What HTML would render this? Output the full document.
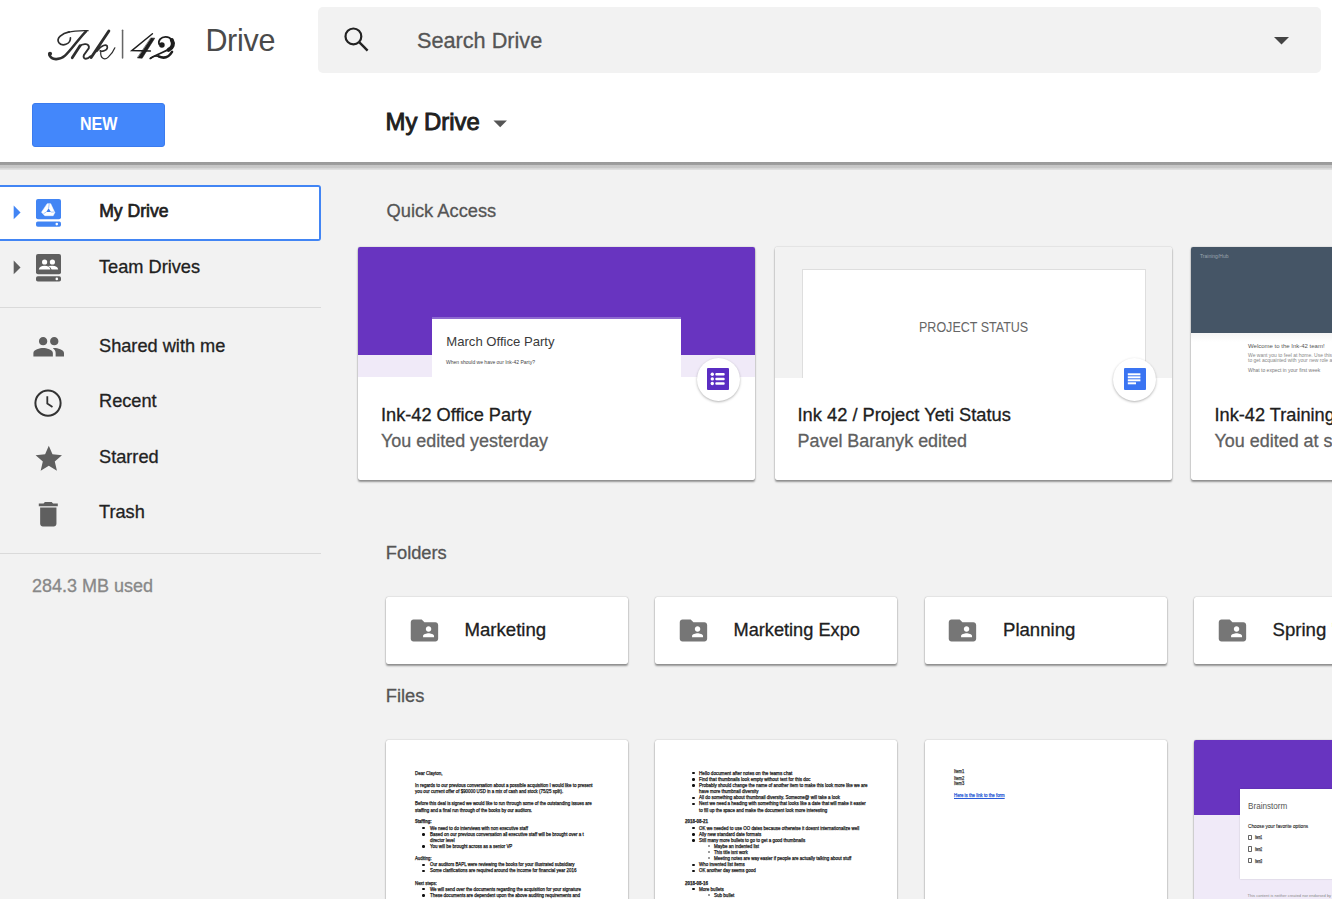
<!DOCTYPE html>
<html><head><meta charset="utf-8"><title>Drive</title><style>
*{box-sizing:border-box;margin:0;padding:0}
html,body{width:1332px;height:899px;overflow:hidden;background:#f2f2f2;font-family:"Liberation Sans",sans-serif}
body{position:relative}
.a{position:absolute}
.t{position:absolute;line-height:1;white-space:nowrap}
.card{position:absolute;background:#fff;box-shadow:0 0 1.2px rgba(0,0,0,.4),0 2px 2px rgba(0,0,0,.38);border-radius:2px;overflow:hidden}
.bar{position:absolute;height:2px;background:#9a9a9a}
</style></head><body>
<div class="a" style="left:0;top:185px;width:321px;height:56px;background:#fff;border:2px solid #4285f4;border-left:none;border-radius:0 3px 3px 0"></div>
<svg class="a" style="left:-0.2px;top:196.2px;" width="32.9" height="32.9" viewBox="0 0 24 24"><path d="M10 17l5-5-5-5v10z" fill="#4285f4"/></svg>
<svg class="a" style="left:-0.2px;top:250.5px;" width="32.9" height="32.9" viewBox="0 0 24 24"><path d="M10 17l5-5-5-5v10z" fill="#5f5f5f"/></svg>
<svg class="a" style="left:36px;top:198.5px" width="25" height="28" viewBox="0 0 25 28">
<rect x="0" y="0" width="25" height="20.2" rx="2" fill="#4285f4"/>
<rect x="0" y="22.5" width="25" height="5.2" rx="1.8" fill="#4285f4"/>
<circle cx="20.8" cy="25.1" r="1.3" fill="#fff"/>
<path d="M11.2 4.7 L14.7 4.7 L18.8 13.6 L17.2 16.7 L8.8 16.7 L5.5 13.2 Z" fill="#fff" stroke="#fff" stroke-width="0.5" stroke-linejoin="round"/><path d="M12.6 9.2 L14.9 13.1 L10.3 13.1 Z" fill="#3b7ef0"/><path d="M12.6 9.2 L13.2 5 M10.3 13.1 L7.6 14.6 M14.9 13.1 L18 13" stroke="#6a9ff5" stroke-width="0.6"/>
</svg>
<svg class="a" style="left:36px;top:254px" width="25" height="28" viewBox="0 0 25 28">
<rect x="0" y="0" width="25" height="20.2" rx="2" fill="#5f5f5f"/>
<rect x="0" y="22.2" width="25" height="5.4" rx="1.8" fill="#5f5f5f"/>
<circle cx="20.8" cy="24.9" r="1.3" fill="#fff"/>
<circle cx="8.6" cy="8" r="2.6" fill="#fff"/><circle cx="16.4" cy="8" r="2.6" fill="#fff"/>
<path d="M2.8 15.4 Q3.5 11.8 8.6 11.8 Q13.7 11.8 14.4 15.4Z M12.2 11.9 Q13.2 11.8 16.4 11.8 Q21.5 11.8 22.2 15.4 L15.6 15.4 Q15 13 12.2 11.9Z" fill="#fff"/>
</svg>
<div class="t" style="left:99.2px;top:203.20px;font-size:17.6px;color:#202020;font-weight:normal;letter-spacing:0px;-webkit-text-stroke:0.67px #202020;">My Drive</div>
<div class="t" style="left:99px;top:257.59px;font-size:18.2px;color:#202020;font-weight:normal;letter-spacing:0px;-webkit-text-stroke:0.3px #202020;">Team Drives</div>
<div class="a" style="left:0;top:307px;width:321px;height:1px;background:#dadada"></div>
<svg class="a" style="left:31.8px;top:330.1px;" width="33.4" height="33.4" viewBox="0 0 24 24"><path d="M16 11c1.66 0 2.99-1.34 2.99-3S17.66 5 16 5c-1.66 0-3 1.34-3 3s1.34 3 3 3zm-8 0c1.66 0 2.990-1.34 2.99-3S9.66 5 8 5C6.34 5 5 6.34 5 8s1.34 3 3 3zm0 2c-2.33 0-7 1.170-7 3.5V19h14v-2.5c0-2.33-4.67-3.5-7-3.5zm8 0c-.29 0-.62.02-.97.05 1.16.84 1.97 1.97 1.97 3.45V19h6v-2.5c0-2.33-4.67-3.5-7-3.5z" fill="#5f5f5f"/></svg>
<svg class="a" style="left:34px;top:388.5px" width="29" height="29" viewBox="0 0 29 29"><circle cx="14" cy="14.1" r="12.6" fill="none" stroke="#333" stroke-width="2"/><path d="M13.3 7.3 V14.6 L18.5 18" fill="none" stroke="#333" stroke-width="1.8"/></svg>
<svg class="a" style="left:32.7px;top:442.7px;" width="31.6" height="31.6" viewBox="0 0 24 24"><path d="M12 17.27L18.18 21l-1.64-7.03L22 9.24l-7.19-.61L12 2 9.19 8.63 2 9.24l5.46 4.73L5.82 21z" fill="#5f5f5f"/></svg>
<svg class="a" style="left:32.2px;top:497.5px;" width="32.6" height="32.6" viewBox="0 0 24 24"><path d="M6 19c0 1.1.9 2 2 2h8c1.1 0 2-.9 2-2V7H6v12zM19 4h-3.5l-1-1h-5l-1 1H5v2h14V4z" fill="#5f5f5f"/></svg>
<div class="t" style="left:99px;top:337.19px;font-size:18.2px;color:#222;font-weight:normal;letter-spacing:0px;-webkit-text-stroke:0.3px #222;">Shared with me</div>
<div class="t" style="left:99px;top:392.19px;font-size:18.2px;color:#222;font-weight:normal;letter-spacing:0px;-webkit-text-stroke:0.3px #222;">Recent</div>
<div class="t" style="left:99px;top:447.69px;font-size:18.2px;color:#222;font-weight:normal;letter-spacing:0px;-webkit-text-stroke:0.3px #222;">Starred</div>
<div class="t" style="left:99px;top:503.19px;font-size:18.2px;color:#222;font-weight:normal;letter-spacing:0px;-webkit-text-stroke:0.3px #222;">Trash</div>
<div class="a" style="left:0;top:553px;width:321px;height:1px;background:#dadada"></div>
<div class="t" style="left:32px;top:576.86px;font-size:18px;color:#888;font-weight:normal;letter-spacing:0px;-webkit-text-stroke:0.3px #888;">284.3 MB used</div>
<div class="t" style="left:386.5px;top:202.41px;font-size:18.3px;color:#555;font-weight:normal;letter-spacing:0px;-webkit-text-stroke:0.3px #555;">Quick Access</div>
<div class="card" style="left:358px;top:247px;width:397px;height:233px">
<div class="a" style="left:0;top:0;width:397px;height:108px;background:#6834c0"></div>
<div class="a" style="left:0;top:108px;width:397px;height:22px;background:#f0eaf8"></div>
<div class="a" style="left:74px;top:70px;width:249px;height:60px;background:#fff;border-top:2px solid #8e6ad0"></div>
<div class="t" style="left:88.3px;top:87.61px;font-size:13.1px;color:#3a3a3a;font-weight:normal;letter-spacing:0px;">March Office Party</div>
<div class="t" style="left:88px;top:112.87px;font-size:5px;color:#444;font-weight:normal;letter-spacing:0px;">When should we have our Ink-42 Party?</div>
<div class="t" style="left:23px;top:159.49px;font-size:18.2px;color:#202020;font-weight:normal;letter-spacing:0px;-webkit-text-stroke:0.3px #202020;">Ink-42 Office Party</div>
<div class="t" style="left:23px;top:185.71px;font-size:17.95px;color:#5f5f5f;font-weight:normal;letter-spacing:0px;-webkit-text-stroke:0.3px #5f5f5f;">You edited yesterday</div>
</div>
<div class="card" style="left:775px;top:247px;width:397px;height:233px">
<div class="a" style="left:0;top:0;width:397px;height:131px;background:#f2f2f2"></div>
<div class="a" style="left:26.5px;top:22px;width:344px;height:109px;background:#fff;border:1px solid #dedede;border-bottom:none"></div>
<div class="t" style="left:143.70000000000005px;top:73.05px;font-size:14px;color:#666;font-weight:normal;transform:scaleX(0.894);transform-origin:0 0;-webkit-text-stroke:0.25px #666;-webkit-text-stroke:0">PROJECT STATUS</div>
<div class="t" style="left:22.5px;top:159.41px;font-size:18.3px;color:#202020;font-weight:normal;letter-spacing:0px;-webkit-text-stroke:0.3px #202020;">Ink 42 / Project Yeti Status</div>
<div class="t" style="left:22.5px;top:185.71px;font-size:17.95px;color:#5f5f5f;font-weight:normal;letter-spacing:0px;-webkit-text-stroke:0.3px #5f5f5f;">Pavel Baranyk edited</div>
</div>
<div class="card" style="left:1191px;top:247px;width:200px;height:233px">
<div class="a" style="left:0;top:0;width:200px;height:86px;background:#455566"></div>
<div class="t" style="left:9px;top:6.87px;font-size:5px;color:#9aa4ae;font-weight:normal;letter-spacing:0px;">Training/Hub</div>
<div class="a" style="left:0;top:86px;width:200px;height:9px;background:linear-gradient(#f4f4f4,#fff)"></div>
<div class="t" style="left:57px;top:96.02px;font-size:6px;color:#555;font-weight:normal;letter-spacing:0px;">Welcome to the Ink-42 team!</div>
<div class="t" style="left:57px;top:105.87px;font-size:5px;color:#888;font-weight:normal;letter-spacing:0px;">We want you to feel at home. Use this document</div>
<div class="t" style="left:57px;top:111.37px;font-size:5px;color:#888;font-weight:normal;letter-spacing:0px;">to get acquainted with your new role and to</div>
<div class="t" style="left:57px;top:120.87px;font-size:5px;color:#777;font-weight:normal;letter-spacing:0px;">What to expect in your first week</div>
<div class="t" style="left:23.5px;top:159.49px;font-size:18.2px;color:#202020;font-weight:normal;letter-spacing:0px;-webkit-text-stroke:0.3px #202020;">Ink-42 Training</div>
<div class="t" style="left:23.5px;top:185.71px;font-size:17.95px;color:#5f5f5f;font-weight:normal;letter-spacing:0px;-webkit-text-stroke:0.3px #5f5f5f;">You edited at s</div>
</div>
<div class="a" style="left:696.5px;top:357.5px;width:43px;height:43px;border-radius:50%;background:#fff;box-shadow:0 1px 2.5px rgba(0,0,0,.3)"></div>
<svg class="a" style="left:707px;top:368.2px" width="22" height="22" viewBox="0 0 22 22"><rect width="22" height="22" rx="1" fill="#5a2dc2"/><circle cx="5.3" cy="6.3" r="1.7" fill="#fff"/><circle cx="5.3" cy="10.9" r="1.7" fill="#fff"/><circle cx="5.3" cy="15.5" r="1.7" fill="#fff"/><rect x="8.3" y="5.1" width="9.4" height="2.5" rx="1" fill="#fff"/><rect x="8.3" y="9.7" width="9.4" height="2.5" rx="1" fill="#fff"/><rect x="8.3" y="14.3" width="9.4" height="2.5" rx="1" fill="#fff"/></svg>
<div class="a" style="left:1113px;top:357.5px;width:43px;height:43px;border-radius:50%;background:#fff;box-shadow:0 1px 2.5px rgba(0,0,0,.3)"></div>
<svg class="a" style="left:1123.5px;top:368px" width="22" height="22" viewBox="0 0 22 22"><rect width="22" height="22" rx="1" fill="#3a74f2"/><rect x="3.8" y="5.3" width="12.6" height="2" fill="#fff"/><rect x="3.8" y="8.3" width="12.6" height="2" fill="#fff"/><rect x="3.8" y="11.3" width="12.6" height="2" fill="#fff"/><rect x="3.8" y="14.3" width="8.2" height="2" fill="#fff"/></svg>
<div class="t" style="left:385.8px;top:544.01px;font-size:18.3px;color:#555;font-weight:normal;letter-spacing:0px;-webkit-text-stroke:0.3px #555;">Folders</div>
<div class="card" style="left:386px;top:597px;width:242px;height:67px"></div>
<svg class="a" style="left:407.9px;top:613.9px;" width="32.9" height="32.9" viewBox="0 0 24 24"><path d="M20 6h-8l-2-2H4c-1.1 0-1.99.9-1.99 2L2 18c0 1.1.9 2 2 2h16c1.1 0 2-.9 2-2V8c0-1.1-.9-2-2-2zm-5 3c1.1 0 2 .9 2 2s-.9 2-2 2-2-.9-2-2 .9-2 2-2zm4 8h-8v-1c0-1.33 2.67-2 4-2s4 .67 4 2v1z" fill="#767676"/></svg>
<div class="t" style="left:464.5px;top:621.16px;font-size:18.6px;color:#202020;font-weight:normal;letter-spacing:0px;-webkit-text-stroke:0.3px #202020;">Marketing</div>
<div class="card" style="left:655px;top:597px;width:242px;height:67px"></div>
<svg class="a" style="left:676.9px;top:613.9px;" width="32.9" height="32.9" viewBox="0 0 24 24"><path d="M20 6h-8l-2-2H4c-1.1 0-1.99.9-1.99 2L2 18c0 1.1.9 2 2 2h16c1.1 0 2-.9 2-2V8c0-1.1-.9-2-2-2zm-5 3c1.1 0 2 .9 2 2s-.9 2-2 2-2-.9-2-2 .9-2 2-2zm4 8h-8v-1c0-1.33 2.67-2 4-2s4 .67 4 2v1z" fill="#767676"/></svg>
<div class="t" style="left:733.5px;top:621.49px;font-size:18.2px;color:#202020;font-weight:normal;letter-spacing:0px;-webkit-text-stroke:0.3px #202020;">Marketing Expo</div>
<div class="card" style="left:924.5px;top:597px;width:242px;height:67px"></div>
<svg class="a" style="left:946.4px;top:613.9px;" width="32.9" height="32.9" viewBox="0 0 24 24"><path d="M20 6h-8l-2-2H4c-1.1 0-1.99.9-1.99 2L2 18c0 1.1.9 2 2 2h16c1.1 0 2-.9 2-2V8c0-1.1-.9-2-2-2zm-5 3c1.1 0 2 .9 2 2s-.9 2-2 2-2-.9-2-2 .9-2 2-2zm4 8h-8v-1c0-1.33 2.67-2 4-2s4 .67 4 2v1z" fill="#767676"/></svg>
<div class="t" style="left:1003.0px;top:621.16px;font-size:18.6px;color:#202020;font-weight:normal;letter-spacing:0px;-webkit-text-stroke:0.3px #202020;">Planning</div>
<div class="card" style="left:1194px;top:597px;width:242px;height:67px"></div>
<svg class="a" style="left:1215.9px;top:613.9px;" width="32.9" height="32.9" viewBox="0 0 24 24"><path d="M20 6h-8l-2-2H4c-1.1 0-1.99.9-1.99 2L2 18c0 1.1.9 2 2 2h16c1.1 0 2-.9 2-2V8c0-1.1-.9-2-2-2zm-5 3c1.1 0 2 .9 2 2s-.9 2-2 2-2-.9-2-2 .9-2 2-2zm4 8h-8v-1c0-1.33 2.67-2 4-2s4 .67 4 2v1z" fill="#767676"/></svg>
<div class="t" style="left:1272.5px;top:621.16px;font-size:18.6px;color:#202020;font-weight:normal;letter-spacing:0px;-webkit-text-stroke:0.3px #202020;">Spring &#x27;18</div>
<div class="t" style="left:385.8px;top:687.31px;font-size:18.3px;color:#555;font-weight:normal;letter-spacing:0px;-webkit-text-stroke:0.3px #555;">Files</div>
<div class="card" style="left:386px;top:740px;width:242px;height:170px"></div>
<div class="t" style="left:415.3px;top:772.04px;font-size:4.8px;color:#1a1a1a;font-weight:normal;transform:scaleX(0.937);transform-origin:0 0;-webkit-text-stroke:0.25px #1a1a1a;">Dear Clayton,</div>
<div class="t" style="left:415.3px;top:783.94px;font-size:4.8px;color:#1a1a1a;font-weight:normal;transform:scaleX(0.929);transform-origin:0 0;-webkit-text-stroke:0.25px #1a1a1a;">In regards to our previous conversation about a possible acquisition I would like to present</div>
<div class="t" style="left:415.3px;top:790.34px;font-size:4.8px;color:#1a1a1a;font-weight:normal;transform:scaleX(0.918);transform-origin:0 0;-webkit-text-stroke:0.25px #1a1a1a;">you our current offer of $90000 USD in a mix of cash and stock (75/25 split).</div>
<div class="t" style="left:415.3px;top:802.24px;font-size:4.8px;color:#1a1a1a;font-weight:normal;transform:scaleX(0.928);transform-origin:0 0;-webkit-text-stroke:0.25px #1a1a1a;">Before this deal is signed we would like to run through some of the outstanding issues are</div>
<div class="t" style="left:415.3px;top:808.64px;font-size:4.8px;color:#1a1a1a;font-weight:normal;transform:scaleX(0.925);transform-origin:0 0;-webkit-text-stroke:0.25px #1a1a1a;">staffing and a final run through of the books by our auditors.</div>
<div class="t" style="left:415.3px;top:820.24px;font-size:4.8px;color:#1a1a1a;font-weight:bold;transform:scaleX(0.848);transform-origin:0 0;-webkit-text-stroke:0.25px #1a1a1a;">Staffing:</div>
<div class="t" style="left:430px;top:826.64px;font-size:4.8px;color:#1a1a1a;font-weight:normal;transform:scaleX(0.934);transform-origin:0 0;-webkit-text-stroke:0.25px #1a1a1a;">We need to do interviews with non executive staff</div>
<div class="t" style="left:430px;top:832.84px;font-size:4.8px;color:#1a1a1a;font-weight:normal;transform:scaleX(0.936);transform-origin:0 0;-webkit-text-stroke:0.25px #1a1a1a;">Based on our previous conversation all executive staff will be brought over a t</div>
<div class="t" style="left:430px;top:838.84px;font-size:4.8px;color:#1a1a1a;font-weight:normal;transform:scaleX(0.908);transform-origin:0 0;-webkit-text-stroke:0.25px #1a1a1a;">director level</div>
<div class="t" style="left:430px;top:844.94px;font-size:4.8px;color:#1a1a1a;font-weight:normal;transform:scaleX(0.932);transform-origin:0 0;-webkit-text-stroke:0.25px #1a1a1a;">You will be brought across as a senior VP</div>
<div class="t" style="left:415.3px;top:857.24px;font-size:4.8px;color:#1a1a1a;font-weight:normal;transform:scaleX(0.894);transform-origin:0 0;-webkit-text-stroke:0.25px #1a1a1a;">Auditing:</div>
<div class="t" style="left:430px;top:863.24px;font-size:4.8px;color:#1a1a1a;font-weight:normal;transform:scaleX(0.917);transform-origin:0 0;-webkit-text-stroke:0.25px #1a1a1a;">Our auditors BAPL were reviewing the books for your illustrated subsidiary</div>
<div class="t" style="left:430px;top:869.44px;font-size:4.8px;color:#1a1a1a;font-weight:normal;transform:scaleX(0.932);transform-origin:0 0;-webkit-text-stroke:0.25px #1a1a1a;">Some clarifications are required around the income for financial year 2016</div>
<div class="t" style="left:415.3px;top:881.54px;font-size:4.8px;color:#1a1a1a;font-weight:normal;transform:scaleX(0.916);transform-origin:0 0;-webkit-text-stroke:0.25px #1a1a1a;">Next steps:</div>
<div class="t" style="left:430px;top:887.74px;font-size:4.8px;color:#1a1a1a;font-weight:normal;transform:scaleX(0.928);transform-origin:0 0;-webkit-text-stroke:0.25px #1a1a1a;">We will send over the documents regarding the acquisition for your signature</div>
<div class="t" style="left:430px;top:893.84px;font-size:4.8px;color:#1a1a1a;font-weight:normal;transform:scaleX(0.928);transform-origin:0 0;-webkit-text-stroke:0.25px #1a1a1a;">These documents are dependent upon the above auditing requirements and</div>
<div class="a" style="left:422.4px;top:827.0px;width:2.4px;height:2.4px;border-radius:50%;background:#111"></div>
<div class="a" style="left:422.4px;top:833.2px;width:2.4px;height:2.4px;border-radius:50%;background:#111"></div>
<div class="a" style="left:422.4px;top:845.3px;width:2.4px;height:2.4px;border-radius:50%;background:#111"></div>
<div class="a" style="left:422.4px;top:863.6px;width:2.4px;height:2.4px;border-radius:50%;background:#111"></div>
<div class="a" style="left:422.4px;top:869.8px;width:2.4px;height:2.4px;border-radius:50%;background:#111"></div>
<div class="a" style="left:422.4px;top:888.1px;width:2.4px;height:2.4px;border-radius:50%;background:#111"></div>
<div class="a" style="left:422.4px;top:894.2px;width:2.4px;height:2.4px;border-radius:50%;background:#111"></div>
<div class="card" style="left:655px;top:740px;width:242px;height:170px"></div>
<div class="t" style="left:699px;top:771.64px;font-size:4.8px;color:#1a1a1a;font-weight:normal;transform:scaleX(0.964);transform-origin:0 0;-webkit-text-stroke:0.25px #1a1a1a;">Hello document after notes on the teams chat</div>
<div class="t" style="left:699px;top:777.84px;font-size:4.8px;color:#1a1a1a;font-weight:normal;transform:scaleX(0.945);transform-origin:0 0;-webkit-text-stroke:0.25px #1a1a1a;">Find that thumbnails look empty without text for this doc</div>
<div class="t" style="left:699px;top:783.94px;font-size:4.8px;color:#1a1a1a;font-weight:normal;transform:scaleX(0.936);transform-origin:0 0;-webkit-text-stroke:0.25px #1a1a1a;">Probably should change the name of another item to make this look more like we are</div>
<div class="t" style="left:699px;top:789.94px;font-size:4.8px;color:#1a1a1a;font-weight:normal;transform:scaleX(0.933);transform-origin:0 0;-webkit-text-stroke:0.25px #1a1a1a;">have more thumbnail diversity</div>
<div class="t" style="left:699px;top:796.24px;font-size:4.8px;color:#1a1a1a;font-weight:normal;transform:scaleX(0.939);transform-origin:0 0;-webkit-text-stroke:0.25px #1a1a1a;">All do something about thumbnail diversity. Someone@ will take a look</div>
<div class="t" style="left:699px;top:802.24px;font-size:4.8px;color:#1a1a1a;font-weight:normal;transform:scaleX(0.933);transform-origin:0 0;-webkit-text-stroke:0.25px #1a1a1a;">Next we need a heading with something that looks like a date that will make it easier</div>
<div class="t" style="left:699px;top:808.64px;font-size:4.8px;color:#1a1a1a;font-weight:normal;transform:scaleX(0.933);transform-origin:0 0;-webkit-text-stroke:0.25px #1a1a1a;">to fill up the space and make the document look more interesting</div>
<div class="t" style="left:685.2px;top:820.24px;font-size:4.8px;color:#1a1a1a;font-weight:bold;transform:scaleX(0.933);transform-origin:0 0;-webkit-text-stroke:0.25px #1a1a1a;">2018-08-21</div>
<div class="t" style="left:699px;top:826.64px;font-size:4.8px;color:#1a1a1a;font-weight:normal;transform:scaleX(0.931);transform-origin:0 0;-webkit-text-stroke:0.25px #1a1a1a;">OK we needed to use OO dates because otherwise it doesnt internationalize well</div>
<div class="t" style="left:699px;top:832.84px;font-size:4.8px;color:#1a1a1a;font-weight:normal;transform:scaleX(0.944);transform-origin:0 0;-webkit-text-stroke:0.25px #1a1a1a;">Ally new standard date formats</div>
<div class="t" style="left:699px;top:838.84px;font-size:4.8px;color:#1a1a1a;font-weight:normal;transform:scaleX(0.930);transform-origin:0 0;-webkit-text-stroke:0.25px #1a1a1a;">Still many more bullets to go to get a good thumbnails</div>
<div class="t" style="left:713.6px;top:844.94px;font-size:4.8px;color:#1a1a1a;font-weight:normal;transform:scaleX(0.935);transform-origin:0 0;-webkit-text-stroke:0.25px #1a1a1a;">Maybe an indented list</div>
<div class="t" style="left:713.6px;top:851.14px;font-size:4.8px;color:#1a1a1a;font-weight:normal;transform:scaleX(0.889);transform-origin:0 0;-webkit-text-stroke:0.25px #1a1a1a;">This title isnt work</div>
<div class="t" style="left:713.6px;top:857.24px;font-size:4.8px;color:#1a1a1a;font-weight:normal;transform:scaleX(0.935);transform-origin:0 0;-webkit-text-stroke:0.25px #1a1a1a;">Meeting notes are way easier if people are actually talking about stuff</div>
<div class="t" style="left:699px;top:863.24px;font-size:4.8px;color:#1a1a1a;font-weight:normal;transform:scaleX(0.928);transform-origin:0 0;-webkit-text-stroke:0.25px #1a1a1a;">Who invented list items</div>
<div class="t" style="left:699px;top:869.44px;font-size:4.8px;color:#1a1a1a;font-weight:normal;transform:scaleX(0.928);transform-origin:0 0;-webkit-text-stroke:0.25px #1a1a1a;">OK another day seems good</div>
<div class="t" style="left:685.2px;top:881.54px;font-size:4.8px;color:#1a1a1a;font-weight:bold;transform:scaleX(0.933);transform-origin:0 0;-webkit-text-stroke:0.25px #1a1a1a;">2018-08-16</div>
<div class="t" style="left:699px;top:887.74px;font-size:4.8px;color:#1a1a1a;font-weight:normal;transform:scaleX(0.945);transform-origin:0 0;-webkit-text-stroke:0.25px #1a1a1a;">More bullets</div>
<div class="t" style="left:713.6px;top:893.84px;font-size:4.8px;color:#1a1a1a;font-weight:normal;transform:scaleX(0.946);transform-origin:0 0;-webkit-text-stroke:0.25px #1a1a1a;">Sub bullet</div>
<div class="a" style="left:692.4px;top:772.0px;width:2.4px;height:2.4px;border-radius:50%;background:#111"></div>
<div class="a" style="left:692.4px;top:778.2px;width:2.4px;height:2.4px;border-radius:50%;background:#111"></div>
<div class="a" style="left:692.4px;top:784.3px;width:2.4px;height:2.4px;border-radius:50%;background:#111"></div>
<div class="a" style="left:692.4px;top:796.6px;width:2.4px;height:2.4px;border-radius:50%;background:#111"></div>
<div class="a" style="left:692.4px;top:802.6px;width:2.4px;height:2.4px;border-radius:50%;background:#111"></div>
<div class="a" style="left:692.4px;top:827.0px;width:2.4px;height:2.4px;border-radius:50%;background:#111"></div>
<div class="a" style="left:692.4px;top:833.2px;width:2.4px;height:2.4px;border-radius:50%;background:#111"></div>
<div class="a" style="left:692.4px;top:839.2px;width:2.4px;height:2.4px;border-radius:50%;background:#111"></div>
<div class="a" style="left:692.4px;top:863.6px;width:2.4px;height:2.4px;border-radius:50%;background:#111"></div>
<div class="a" style="left:692.4px;top:869.8px;width:2.4px;height:2.4px;border-radius:50%;background:#111"></div>
<div class="a" style="left:692.4px;top:888.1px;width:2.4px;height:2.4px;border-radius:50%;background:#111"></div>
<div class="a" style="left:707.6px;top:845.0px;width:1.8px;height:1.8px;border-radius:50%;border:0.5px solid #555"></div>
<div class="a" style="left:707.6px;top:851.2px;width:1.8px;height:1.8px;border-radius:50%;border:0.5px solid #555"></div>
<div class="a" style="left:707.6px;top:857.3px;width:1.8px;height:1.8px;border-radius:50%;border:0.5px solid #555"></div>
<div class="a" style="left:707.6px;top:893.9px;width:1.8px;height:1.8px;border-radius:50%;border:0.5px solid #555"></div>
<div class="card" style="left:924.5px;top:740px;width:242px;height:170px"></div>
<div class="t" style="left:953.7px;top:770.24px;font-size:4.8px;color:#333;font-weight:normal;transform:scaleX(0.850);transform-origin:0 0;-webkit-text-stroke:0.25px #333;">Item1</div>
<div class="t" style="left:953.7px;top:776.54px;font-size:4.8px;color:#333;font-weight:normal;transform:scaleX(0.850);transform-origin:0 0;-webkit-text-stroke:0.25px #333;">Item2</div>
<div class="t" style="left:953.7px;top:782.24px;font-size:4.8px;color:#333;font-weight:normal;transform:scaleX(0.850);transform-origin:0 0;-webkit-text-stroke:0.25px #333;">Item3</div>
<div class="t" style="left:953.7px;top:794.04px;font-size:4.8px;color:#2a5bd7;font-weight:normal;transform:scaleX(0.905);transform-origin:0 0;-webkit-text-stroke:0.25px #2a5bd7;text-decoration:underline">Here is the link to the form</div>
<div class="card" style="left:1194px;top:740px;width:200px;height:170px">
<div class="a" style="left:0;top:0;width:200px;height:75px;background:#6834c0"></div>
<div class="a" style="left:0;top:75px;width:200px;height:100px;background:#f0eaf8"></div>
<div class="a" style="left:46px;top:49px;width:160px;height:90px;background:#fff;box-shadow:0 0 1.5px rgba(0,0,0,.2)"></div>
<div class="t" style="left:54.40000000000009px;top:61.06px;font-size:9.5px;color:#555;font-weight:normal;transform:scaleX(0.856);transform-origin:0 0;-webkit-text-stroke:0.25px #555;-webkit-text-stroke:0">Brainstorm</div>
<div class="t" style="left:53.5px;top:84.54px;font-size:4.8px;color:#222;font-weight:normal;transform:scaleX(0.985);transform-origin:0 0;-webkit-text-stroke:0.25px #222;-webkit-text-stroke:0.1px #222">Choose your favorite options</div>
<div class="a" style="left:54.2px;top:94.5px;width:4.2px;height:5.2px;border:0.7px solid #666;border-radius:0.8px"></div>
<div class="t" style="left:61.4px;top:95.89px;font-size:4.5px;color:#333;font-weight:normal;transform:scaleX(0.631);transform-origin:0 0;-webkit-text-stroke:0.25px #333;">Item1</div>
<div class="a" style="left:54.2px;top:106.4px;width:4.2px;height:5.2px;border:0.7px solid #666;border-radius:0.8px"></div>
<div class="t" style="left:61.4px;top:107.79px;font-size:4.5px;color:#333;font-weight:normal;transform:scaleX(0.631);transform-origin:0 0;-webkit-text-stroke:0.25px #333;">Item2</div>
<div class="a" style="left:54.2px;top:118.30000000000001px;width:4.2px;height:5.2px;border:0.7px solid #666;border-radius:0.8px"></div>
<div class="t" style="left:61.4px;top:119.69px;font-size:4.5px;color:#333;font-weight:normal;transform:scaleX(0.631);transform-origin:0 0;-webkit-text-stroke:0.25px #333;">Item3</div>
<div class="t" style="left:53.5px;top:153.71px;font-size:4px;color:#888;font-weight:normal;letter-spacing:0px;">This content is neither created nor endorsed by Google. Report Abuse</div>
</div>
<div class="a" style="left:0;top:0;width:1332px;height:162px;background:#fff;z-index:5">
<div class="a" style="left:0;top:162px;width:1332px;height:8px;background:linear-gradient(#999 0,#9e9e9e 2.6px,#c6c6c6 3.4px,#c9c9c9 6px,#dadada 6.6px,#e2e2e2 8px)"></div>
<svg class="a" style="left:44px;top:25px" width="80" height="40" viewBox="0 0 1332 666" fill="none" stroke="#2e2e2e" stroke-linecap="round">
<path d="M440 215 C445 320 300 370 245 290 C200 220 300 140 420 115" stroke-width="28"/>
<path d="M400 122 C500 95 620 92 735 95" stroke-width="20"/>
<path d="M700 105 C600 200 450 420 350 510 C260 590 120 590 88 495" stroke-width="42"/>
<circle cx="100" cy="478" r="34" fill="#2e2e2e" stroke="none"/>
<path d="M470 545 L600 345" stroke-width="46"/>
<path d="M590 360 C640 300 770 300 745 390 L665 500 C640 560 700 590 775 520" stroke-width="32"/>
<path d="M1080 100 L785 540" stroke-width="48"/>
<path d="M880 440 C940 340 1060 300 1055 375 C1050 430 960 445 935 430" stroke-width="28"/>
<path d="M945 450 C935 560 1010 590 1070 535 C1120 490 1160 430 1180 380" stroke-width="20"/>
</svg><svg class="a" style="left:120px;top:25px" width="60" height="40" viewBox="0 0 1332 888" fill="none" stroke="#1e1e1e" stroke-linecap="round">
<path d="M57 115 L57 735" stroke="#666" stroke-width="34"/>
<path d="M720 195 L262 568 L675 578" stroke-width="32"/>
<path d="M690 288 L772 292 L492 738 L392 730 Z" fill="#1e1e1e" stroke="#1e1e1e" stroke-width="12" stroke-linejoin="round"/>
<circle cx="930" cy="445" r="62" fill="#1e1e1e" stroke="none"/>
<path d="M872 430 C835 340 915 262 1010 262 C1080 262 1130 300 1150 340" stroke-width="40"/>
<path d="M1150 335 C1200 420 1170 500 1080 552" stroke-width="90"/>
<path d="M1110 530 C950 610 800 660 680 740" stroke-width="40"/>
<path d="M670 745 C720 690 790 670 880 705" stroke-width="34"/>
<path d="M860 697 C960 745 1060 750 1155 595" stroke-width="56"/>
</svg><div class="t" style="left:205.4px;top:25.18px;font-size:30.5px;color:#4a4a4a;font-weight:normal;letter-spacing:-0.3px;-webkit-text-stroke:0.3px #4a4a4a;-webkit-text-stroke:0">Drive</div>
<div class="a" style="left:318px;top:7px;width:1003px;height:66px;background:#f2f2f2;border-radius:5px"></div>
<svg class="a" style="left:336px;top:20px" width="40" height="40" viewBox="336 20 40 40"><circle cx="353.4" cy="36.4" r="7.9" fill="none" stroke="#222" stroke-width="2.2"/><path d="M359.2 42.2 L367.6 50.6" stroke="#222" stroke-width="2.4" stroke-linecap="butt"/></svg>
<div class="t" style="left:416.8px;top:30.38px;font-size:22px;color:#555;font-weight:normal;letter-spacing:0px;-webkit-text-stroke:0.3px #555;transform:scaleX(0.985);transform-origin:0 0">Search Drive</div>
<svg class="a" style="left:1274px;top:37px" width="15" height="8" viewBox="0 0 15 8"><path d="M0 0 L15 0 L7.5 7.5Z" fill="#444"/></svg>
<div class="a" style="left:32px;top:103px;width:133px;height:44px;background:#4387fb;border:1px solid #3b7bee;border-radius:3px"></div>
<div class="t" style="left:80px;top:115.29px;font-size:18.2px;color:#fff;font-weight:bold;letter-spacing:0px;transform:scaleX(0.885);transform-origin:0 0">NEW</div>
<div class="t" style="left:385.6px;top:109.77px;font-size:23.9px;color:#202020;font-weight:normal;letter-spacing:0px;-webkit-text-stroke:0.91px #202020;">My Drive</div>
<svg class="a" style="left:484.2px;top:106.5px;" width="32.4" height="32.4" viewBox="0 0 24 24"><path d="M7 10l5 5 5-5z" fill="#555"/></svg>
</div>
</body></html>
